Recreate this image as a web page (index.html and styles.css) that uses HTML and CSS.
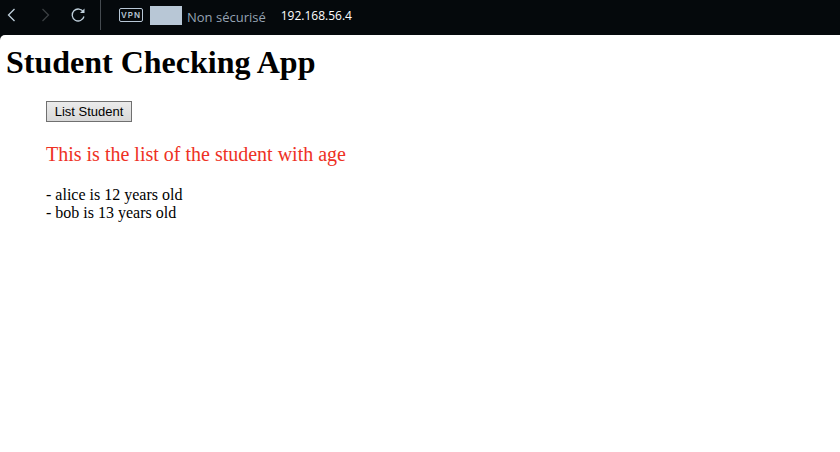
FILE: index.html
```html
<!DOCTYPE html>
<html lang="fr">
<head>
<meta charset="utf-8">
<title>Student Checking App</title>
<link rel="stylesheet" href="styles.css">
</head>
<body>
<header class="toolbar">
  <nav class="nav">
    <button class="icon" type="button" aria-label="Back"><svg width="16" height="16" viewBox="0 0 16 16"><path d="M10.500 2 L4.500 8 L10.500 14"/></svg></button>
    <button class="icon icon-off" type="button" aria-label="Forward" disabled><svg width="16" height="16" viewBox="0 0 16 16"><path d="M5.500 2 L11.500 8 L5.500 14"/></svg></button>
    <button class="icon" type="button" aria-label="Reload"><svg width="16" height="16" viewBox="0 0 16 16"><path d="M13.400 5 A6 6 0 1 0 14 9.500"/><path class="solid" d="M14.500 1.500 V6 H10 Z"/></svg></button>
  </nav>
  <div class="site">
    <span class="vpn">VPN</span>
    <span class="swatch"></span>
    <span class="security">Non sécurisé</span>
    <span class="address">192.168.56.4</span>
  </div>
</header>
<main class="page">
  <h1 class="title">Student Checking App</h1>
  <section class="content">
    <button class="list-button" type="button">List Student</button>
    <p class="intro">This is the list of the student with age</p>
    <div class="students">
      <div>- alice is 12 years old</div>
      <div>- bob is 13 years old</div>
    </div>
  </section>
</main>
</body>
</html>
```
FILE: styles.css
```css
* {
  box-sizing: border-box;
}

body {
  margin: 0;
  min-height: 100vh;
  display: flex;
  flex-direction: column;
  background: #05090c;
  color: #000;
  font: 16px/18px "Liberation Serif", "Times New Roman", serif;
}

.toolbar {
  display: flex;
  height: 35px;
  padding-bottom: 5px;
  color: #b8c7d6;
  white-space: nowrap;
}

.nav {
  display: flex;
  align-items: center;
  gap: 17px;
  width: 101px;
  padding-left: 4px;
  border-right: 1px solid #454b50;
}

.icon {
  width: 16px;
  height: 16px;
  padding: 0;
  border: 0;
  background: none;
  color: #c0d0dc;
}

.icon-off {
  color: #3b3f42;
}

.icon svg {
  display: block;
  fill: none;
  stroke: currentColor;
  stroke-width: 1.3;
}

.icon .solid {
  fill: currentColor;
  stroke: none;
}

.site {
  display: flex;
  align-items: center;
  padding-left: 18px;
}

.vpn {
  width: 24px;
  height: 14px;
  border: 1px solid #b8c7d6;
  border-radius: 2px;
  font: 600 8px/12px Inter, sans-serif;
  letter-spacing: 1px;
  text-align: center;
}

.swatch {
  width: 32px;
  height: 19px;
  margin: 0 5px 0 7px;
  background: #b8c7d6;
}

.security {
  padding-top: 4px;
  color: #95a3b3;
  font: 13px/18px "Open Sans", sans-serif;
}

.address {
  margin-left: 15px;
  padding-top: 2px;
  color: #fff;
  font: 12px/18px "Open Sans", sans-serif;
}

.page {
  flex: 1;
  padding: 9px 6px;
  border-top-left-radius: 5px;
  background: #fff;
}

.title {
  margin: 0 0 20px;
  font-size: 32px;
  line-height: 37px;
}

.content {
  padding-left: 40px;
}

.list-button {
  display: block;
  height: 21px;
  min-width: 86px;
  padding: 0 7px;
  border: 1px solid #707070;
  border-radius: 0;
  background: linear-gradient(#ebebeb, #d8d8d8);
  color: #000;
  font: 13px/19px "Liberation Sans", Arial, sans-serif;
}

.intro {
  margin: 20px 0;
  color: #ee3124;
  font-size: 20px;
  line-height: 24px;
}
```
